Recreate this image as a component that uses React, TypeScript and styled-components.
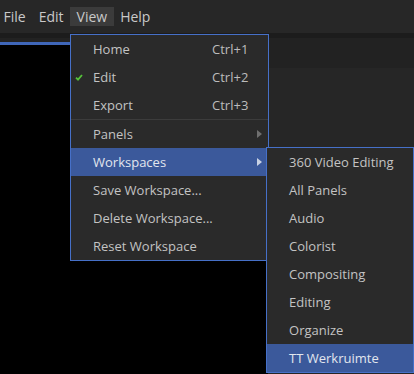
import React from "react";
import styled, { createGlobalStyle } from "styled-components";

const GlobalStyle = createGlobalStyle`
  html, body { margin: 0; padding: 0; background: #000; }
  body { font-family: "Open Sans", "Noto Sans", sans-serif; font-size: 13px; }
  #root { width: 414px; height: 374px; overflow: hidden; }
`;

const Screen = styled.div`
  width: 414px;
  height: 374px;
  display: flex;
  flex-direction: column;
  background: #000;
  overflow: hidden;
`;

const MenuBar = styled.div`
  height: 33px;
  flex: none;
  display: flex;
  align-items: center;
  background: #272727;
  position: relative;
  z-index: 2;
`;

const MenuTitle = styled.div<{ $open?: boolean }>`
  position: relative;
  height: 19px;
  line-height: 19px;
  padding: 0 6.5px;
  font-size: 14px;
  color: #c9c9c9;
  background: ${(p) => (p.$open ? "#3b3b3b" : "transparent")};
  &:first-child { margin-left: -3px; }
`;

const Strip = styled.div`
  height: 5px;
  flex: none;
  background: #1c1c1c;
`;

const PanelRow = styled.div`
  flex: 1;
  display: flex;
  min-height: 0;
`;

const ViewerPanel = styled.div`
  width: 268px;
  flex: none;
  display: flex;
  flex-direction: column;
`;

const ViewerTop = styled.div`
  height: 4px;
  background: #222;
  border-bottom: 3px solid #3f66b8;
`;

const ViewerBody = styled.div`
  flex: 1;
  background: #000;
`;

const SidePanel = styled.div`
  flex: 1;
  display: flex;
  flex-direction: column;
`;

const SideHeader = styled.div`
  height: 30px;
  background: #222;
`;

const SideBody = styled.div`
  flex: 1;
  background: #262626;
`;

const Dropdown = styled.div<{ $width: number }>`
  position: absolute;
  width: ${(p) => p.$width}px;
  box-sizing: border-box;
  background: #2a2a2a;
  border: 1px solid #4670c8;
  display: flex;
  flex-direction: column;
  font-size: 13px;
`;

const MainMenu = styled(Dropdown)`
  left: 0;
  top: 27px;
`;

const SubMenu = styled(Dropdown)`
  left: calc(100% - 2px);
  top: -1px;
`;

const Item = styled.div<{ $active?: boolean }>`
  position: relative;
  height: 28px;
  flex: none;
  display: flex;
  align-items: center;
  color: ${(p) => (p.$active ? "#e2e6ee" : "#c3c3c3")};
  background: ${(p) => (p.$active ? "#3b599b" : "transparent")};
  white-space: nowrap;
`;

const CheckCell = styled.div`
  width: 22px;
  flex: none;
  display: flex;
  align-items: center;
  padding-left: 4px;
  box-sizing: border-box;
`;

const Label = styled.div`
  flex: 1;
`;

const Shortcut = styled.div`
  width: 44px;
  flex: none;
  color: #bcbcbc;
`;

const ArrowCell = styled.div`
  width: 12px;
  flex: none;
  display: flex;
  align-items: center;
  padding-left: 1px;
  box-sizing: border-box;
`;

const Separator = styled.div`
  height: 1px;
  flex: none;
  background: #3c3c3c;
`;

const Check = () => (
  <svg width="8" height="7" viewBox="0 0 8 7">
    <path d="M1 3.6 L3 5.6 L7 1" fill="none" stroke="#55c23a" strokeWidth="1.8" />
  </svg>
);

const Arrow = ({ color }: { color: string }) => (
  <svg width="5" height="8" viewBox="0 0 5 8">
    <path d="M0 0 L5 4 L0 8 Z" fill={color} />
  </svg>
);

const workspaces = [
  "360 Video Editing",
  "All Panels",
  "Audio",
  "Colorist",
  "Compositing",
  "Editing",
  "Organize",
  "TT Werkruimte",
];

export default function App() {
  return (
    <>
      <GlobalStyle />
      <Screen>
        <MenuBar>
          <MenuTitle>File</MenuTitle>
          <MenuTitle>Edit</MenuTitle>
          <MenuTitle $open>
            View
            <MainMenu $width={199}>
              <Item>
                <CheckCell />
                <Label>Home</Label>
                <Shortcut>Ctrl+1</Shortcut>
                <ArrowCell />
              </Item>
              <Item>
                <CheckCell>
                  <Check />
                </CheckCell>
                <Label>Edit</Label>
                <Shortcut>Ctrl+2</Shortcut>
                <ArrowCell />
              </Item>
              <Item>
                <CheckCell />
                <Label>Export</Label>
                <Shortcut>Ctrl+3</Shortcut>
                <ArrowCell />
              </Item>
              <Separator />
              <Item>
                <CheckCell />
                <Label>Panels</Label>
                <ArrowCell>
                  <Arrow color="#6f6f6f" />
                </ArrowCell>
              </Item>
              <Item $active>
                <CheckCell />
                <Label>Workspaces</Label>
                <ArrowCell>
                  <Arrow color="#c9d2e4" />
                </ArrowCell>
                <SubMenu $width={148}>
                  {workspaces.map((w, i) => (
                    <Item key={w} $active={i === workspaces.length - 1}>
                      <CheckCell />
                      <Label>{w}</Label>
                    </Item>
                  ))}
                </SubMenu>
              </Item>
              <Item>
                <CheckCell />
                <Label>Save Workspace...</Label>
              </Item>
              <Item>
                <CheckCell />
                <Label>Delete Workspace...</Label>
              </Item>
              <Item>
                <CheckCell />
                <Label>Reset Workspace</Label>
              </Item>
            </MainMenu>
          </MenuTitle>
          <MenuTitle>Help</MenuTitle>
        </MenuBar>
        <Strip />
        <PanelRow>
          <ViewerPanel>
            <ViewerTop />
            <ViewerBody />
          </ViewerPanel>
          <SidePanel>
            <SideHeader />
            <SideBody />
          </SidePanel>
        </PanelRow>
      </Screen>
    </>
  );
}
